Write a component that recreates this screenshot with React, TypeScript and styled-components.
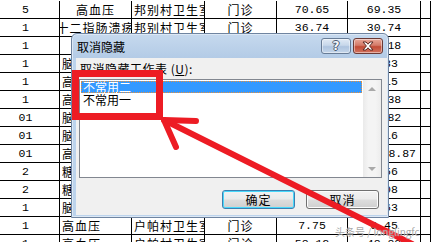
import React from 'react';
import styled, { createGlobalStyle } from 'styled-components';

const GlobalStyle = createGlobalStyle`
  html, body {
    margin: 0;
    padding: 0;
    background: #fff;
  }
  body {
    width: 431px;
    height: 242px;
    overflow: hidden;
    font-family: "Noto Sans CJK SC", sans-serif;
  }
`;

const Screen = styled.div`
  position: relative;
  width: 431px;
  height: 242px;
  overflow: hidden;
  background: #fff;
`;

const Sheet = styled.div`
  display: grid;
  grid-template-columns: 60px 72px 73px 72px 71px 73px 1fr;
  grid-auto-rows: 18px;
  margin-top: 1px;
`;

type Align = 'left' | 'center' | 'right';

const Cell = styled.div<{ $align?: Align; $mono?: boolean }>`
  box-sizing: border-box;
  border-right: 1px solid #000;
  border-bottom: 1px solid #000;
  overflow: hidden;
  white-space: nowrap;
  display: flex;
  align-items: center;
  justify-content: ${(p) =>
    p.$align === 'left' ? 'flex-start' : p.$align === 'right' ? 'flex-end' : 'center'};
  padding: 0 ${(p) => (p.$align === 'right' ? '4px' : '2px')};
  font-family: ${(p) =>
    p.$mono ? '"Liberation Mono", monospace' : '"Noto Sans CJK SC", sans-serif'};
  font-size: ${(p) => (p.$mono ? '11.5px' : '12px')};
  letter-spacing: ${(p) => (p.$mono ? '0' : '1px')};
  color: #000;
`;

const IndexCell = styled(Cell)`
  padding-right: 10px;
`;

const Dialog = styled.div`
  position: absolute;
  left: 71px;
  top: 33px;
  width: 318px;
  height: 185px;
  box-sizing: border-box;
  border: 1px solid #6f84a0;
  border-radius: 6px 6px 0 0;
  background: linear-gradient(#c6d9ee, #b3cbe6 24px, #bcd3ec 24px);
  display: flex;
  flex-direction: column;
  padding: 0 1px 2px 4px;
  box-shadow: inset 0 0 0 1px #dce8f5;
`;

const TitleBar = styled.div`
  height: 24px;
  display: flex;
  align-items: center;
  padding: 0 4px 0 1px;
  gap: 2px;
`;

const Title = styled.div`
  flex: 1;
  font-size: 12px;
  color: #000;
  padding-top: 1px;
`;

const CaptionButton = styled.div<{ $kind: 'help' | 'close' }>`
  width: 30px;
  height: 16px;
  box-sizing: border-box;
  border: 1px solid ${(p) => (p.$kind === 'close' ? '#6b3a35' : '#687c96')};
  border-radius: 3px;
  display: flex;
  align-items: center;
  justify-content: center;
  background: ${(p) =>
    p.$kind === 'close'
      ? 'linear-gradient(#e9a899, #d47a68 45%, #c24b36 55%, #d2735f)'
      : 'linear-gradient(#e1eaf5, #c7d7ea 45%, #aec4df 55%, #c5d6ea)'};
  box-shadow: inset 0 0 0 1px rgba(255, 255, 255, 0.45);
`;

const HelpGlyph = styled.span`
  font-family: "DejaVu Sans", sans-serif;
  font-weight: bold;
  font-size: 12px;
  line-height: 12px;
  color: #f4f6fa;
  text-shadow: 1px 0 0 #4a5a70, -1px 0 0 #4a5a70, 0 1px 0 #4a5a70, 0 -1px 0 #4a5a70;
`;

const Client = styled.div`
  flex: 1;
  background: #f0f0f0;
  display: flex;
  flex-direction: column;
  padding: 4px 5px 6px 3px;
`;

const Label = styled.div`
  font-size: 12px;
  line-height: 14px;
  height: 14px;
  color: #000;
  padding-left: 1px;
  letter-spacing: 0.5px;
`;

const Mnemonic = styled.span`
  text-decoration: underline;
`;

const ListBox = styled.div`
  margin-top: 3px;
  height: 99px;
  box-sizing: border-box;
  border: 1px solid #828790;
  background: #fff;
  display: flex;
`;

const Items = styled.div`
  flex: 1;
  padding: 1px;
  display: flex;
  flex-direction: column;
`;

const Item = styled.div<{ $selected?: boolean }>`
  height: 12px;
  line-height: 12px;
  font-size: 12px;
  padding-left: 2px;
  box-sizing: border-box;
  color: ${(p) => (p.$selected ? '#fff' : '#000')};
  background: ${(p) => (p.$selected ? '#3399ff' : 'transparent')};
  outline: ${(p) => (p.$selected ? '1px dotted #e8903a' : 'none')};
  outline-offset: -1px;
  margin-bottom: 1px;
`;

const ScrollBar = styled.div`
  width: 18px;
  background: linear-gradient(90deg, #eaeaea, #f4f4f4 30%, #f4f4f4 70%, #ececec);
  display: flex;
  flex-direction: column;
  justify-content: space-between;
  align-items: center;
  padding: 7px 0 6px;
  box-sizing: border-box;
`;

const Arrow = styled.div<{ $down?: boolean }>`
  width: 0;
  height: 0;
  border-left: 4px solid transparent;
  border-right: 4px solid transparent;
  ${(p) =>
    p.$down ? 'border-top: 4px solid #a9a9a9;' : 'border-bottom: 4px solid #a9a9a9;'}
`;

const ButtonRow = styled.div`
  margin-top: auto;
  display: flex;
  justify-content: flex-end;
  gap: 11px;
  padding-right: 3px;
`;

const Button = styled.div<{ $default?: boolean }>`
  width: 73px;
  height: 19px;
  box-sizing: border-box;
  border: 1px solid ${(p) => (p.$default ? '#3c7fb1' : '#707070')};
  border-radius: 3px;
  background: linear-gradient(#f2f2f2, #ebebeb 48%, #dddddd 52%, #cfcfcf);
  box-shadow: ${(p) =>
    p.$default ? 'inset 0 0 0 1px #48d8fb' : 'inset 0 0 0 1px #fcfcfc'};
  display: flex;
  align-items: center;
  justify-content: center;
  font-size: 12px;
  letter-spacing: 1px;
  color: #000;
`;

const Highlight = styled.div`
  position: absolute;
  left: 72px;
  top: 70px;
  width: 91px;
  height: 50px;
  box-sizing: border-box;
  border: 7px solid #ed1c24;
`;

const Overlay = styled.svg`
  position: absolute;
  left: 0;
  top: 0;
  pointer-events: none;
`;

const Watermark = styled.div`
  position: absolute;
  left: 335px;
  top: 226px;
  font-family: "Noto Sans CJK SC", sans-serif;
  font-size: 10px;
  line-height: 12px;
  color: rgba(150, 150, 150, 0.85);
  text-shadow: 0 0 1px rgba(255, 255, 255, 0.9);
  white-space: nowrap;
`;

type Row = [string, string, Align, string, string, string, string, Align?];

const rows: Row[] = [
  ['5', '高血压', 'center', '邦别村卫生室', '门诊', '70.65', '69.35'],
  ['1', '十二指肠溃疡', 'center', '邦别村卫生室', '门诊', '36.74', '30.74'],
  ['1', '', 'center', '邦别村卫生室', '门诊', '22.18', '28.18'],
  ['1', '脑梗塞', 'left', '邦别村卫生室', '门诊', '9.33', '8.33'],
  ['1', '高血压', 'left', '邦别村卫生室', '门诊', '9.15', '9.15'],
  ['1', '高血压', 'left', '邦别村卫生室', '门诊', '15.38', '12.38'],
  ['01', '脑梗塞', 'left', '邦别村卫生室', '门诊', '48.82', '45.82'],
  ['01', '脑梗塞', 'left', '邦别村卫生室', '门诊', '2.16', '2.16'],
  ['01', '高血压', 'left', '邦别村卫生室', '门诊', '330.87', '328.87', 'right'],
  ['2', '糖尿病', 'left', '邦别村卫生室', '门诊', '4.56', '4.56'],
  ['2', '糖尿病', 'left', '邦别村卫生室', '门诊', '1.08', '1.08'],
  ['1', '脑梗塞', 'left', '邦别村卫生室', '门诊', '6.63', '6.63'],
  ['1', '高血压', 'left', '户帕村卫生室', '门诊', '7.75', '6.45'],
  ['1', '高血压', 'left', '户帕村卫生室', '门诊', '58.12', '48.88'],
];

const App: React.FC = () => {
  return (
    <Screen>
      <GlobalStyle />
      <Sheet>
        {rows.map((r, i) => (
          <React.Fragment key={i}>
            <IndexCell $mono>{r[0]}</IndexCell>
            <Cell $align={r[2]}>{r[1]}</Cell>
            <Cell $align="left">{r[3]}</Cell>
            <Cell>{r[4]}</Cell>
            <Cell $mono>{r[5]}</Cell>
            <Cell $mono $align={r[7]}>{r[6]}</Cell>
            <Cell />
          </React.Fragment>
        ))}
      </Sheet>

      <Dialog>
        <TitleBar>
          <Title>取消隐藏</Title>
          <CaptionButton $kind="help">
            <HelpGlyph>?</HelpGlyph>
          </CaptionButton>
          <CaptionButton $kind="close">
            <svg width="14" height="10" viewBox="0 0 14 10">
              <path
                d="M2 1h3l2 2.2L9 1h3L8.6 5 12 9H9L7 6.8 5 9H2l3.4-4z"
                fill="#fff"
                stroke="#5a2a24"
                strokeWidth="1"
                strokeLinejoin="round"
              />
            </svg>
          </CaptionButton>
        </TitleBar>
        <Client>
          <Label>
            取消隐藏工作表 (<Mnemonic>U</Mnemonic>):
          </Label>
          <ListBox>
            <Items>
              <Item $selected>不常用二</Item>
              <Item>不常用一</Item>
            </Items>
            <ScrollBar>
              <Arrow />
              <Arrow $down />
            </ScrollBar>
          </ListBox>
          <ButtonRow>
            <Button $default>确定</Button>
            <Button>取消</Button>
          </ButtonRow>
        </Client>
      </Dialog>

      <Highlight />
      <Overlay width="431" height="242" viewBox="0 0 431 242">
        <g stroke="#ed1c24" strokeWidth="6" strokeLinecap="round" fill="none">
          <line x1="166" y1="121" x2="412" y2="244" />
          <line x1="164" y1="120" x2="176" y2="147" />
          <line x1="164" y1="120" x2="196" y2="121" />
        </g>
      </Overlay>
      <Watermark>头条号 / longlingfc</Watermark>
    </Screen>
  );
};

export default App;
